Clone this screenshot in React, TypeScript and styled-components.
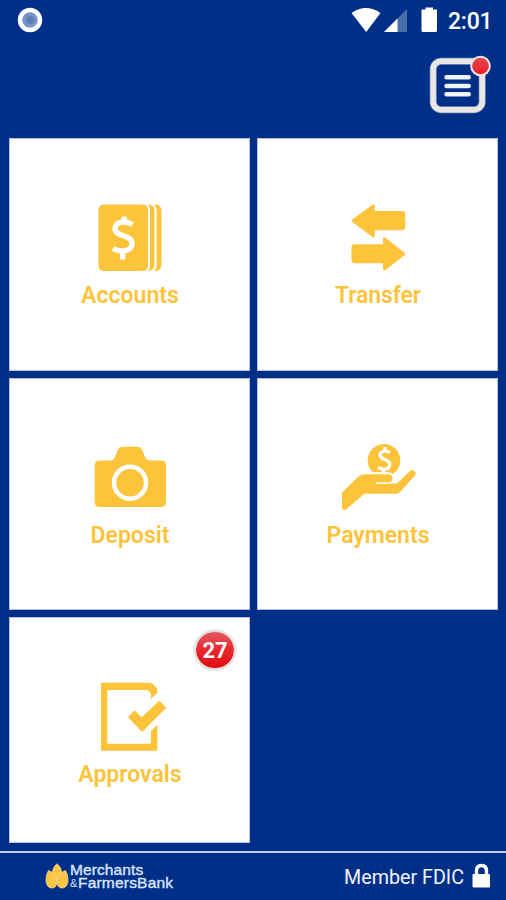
import React from 'react';
import styled, { createGlobalStyle } from 'styled-components';

const NAVY = '#002f87';
const GOLD = '#fdc33b';

const GlobalStyle = createGlobalStyle`
  body {
    margin: 0;
    background: ${NAVY};
    font-family: Roboto, 'Liberation Sans', sans-serif;
  }
`;

const Screen = styled.div`
  display: flex;
  flex-direction: column;
  width: 506px;
  height: 900px;
  overflow: hidden;
  background: ${NAVY};
`;

const StatusBar = styled.div`
  display: flex;
  justify-content: space-between;
  height: 42px;
  box-sizing: border-box;
  padding: 7px 14px 0 17px;
`;

const StatusIcons = styled.div`
  display: flex;
`;

const Clock = styled.span`
  width: 44px;
  margin-left: 10px;
  color: #fff;
  font-size: 23px;
  font-weight: 500;
  line-height: 30px;
  letter-spacing: -0.2px;
  white-space: nowrap;
`;

const Header = styled.div`
  display: flex;
  justify-content: flex-end;
  height: 96px;
  box-sizing: border-box;
  padding: 12px 13px 0 0;
`;

const MenuButton = styled.button`
  width: 66px;
  height: 62px;
  padding: 0;
  border: 0;
  background: none;
`;

const Grid = styled.div`
  display: grid;
  grid-template-columns: 241px 241px;
  grid-template-rows: 233px 232px 226px;
  gap: 7px;
  padding: 0 8px 0 9px;
`;

const Tile = styled.button`
  position: relative;
  display: flex;
  flex-direction: column;
  align-items: center;
  box-sizing: border-box;
  padding: 61px 0 0;
  border: 1px solid #b9bfd8;
  background: #fff;
  font-family: inherit;
`;

const TileLabel = styled.span<{ $spacing: number }>`
  margin-top: 4px;
  padding-left: 1px;
  color: ${GOLD};
  font-size: 23px;
  font-weight: 600;
  line-height: 32px;
  letter-spacing: ${(props) => props.$spacing}px;
`;

const Badge = styled.span`
  position: absolute;
  top: 12px;
  right: 13px;
  width: 38px;
  height: 36px;
  border: 2px solid #e2dfdf;
  outline: 1px solid #efeded;
  border-radius: 21px;
  background: linear-gradient(#e2595c, #e8272d 50%, #e20d14) padding-box;
  color: #fff;
  font-size: 22px;
  font-weight: 700;
  line-height: 38px;
  text-align: center;
`;

const Footer = styled.footer`
  display: flex;
  justify-content: space-between;
  height: 49px;
  margin-top: 8px;
  box-sizing: border-box;
  border-top: 2px solid #c5cdf0;
  padding: 0 15px 0 45px;
`;

const Brand = styled.div`
  display: flex;
  padding-top: 10px;
`;

const BrandName = styled.div`
  display: flex;
  flex-direction: column;
  margin-left: 1px;
  padding-top: 1px;
  color: #d6e3ff;
  font-family: 'Liberation Sans', sans-serif;
  font-size: 15.5px;
  line-height: 12.5px;
  white-space: nowrap;
  -webkit-text-stroke: 0.4px #d6e3ff;
`;

const BrandLine = styled.span<{ $spacing: number }>`
  display: flex;
  letter-spacing: ${(props) => props.$spacing}px;
`;

const Ampersand = styled.span`
  width: 8px;
  font-size: 11px;
  -webkit-text-stroke: 0;
`;

const Member = styled.div`
  display: flex;
  padding-top: 10px;
  color: #f2f4ff;
  font-size: 19.7px;
  line-height: 29px;
  white-space: nowrap;
`;

const Lock = styled.svg`
  margin: 0 0 0 8px;
`;

const AccountsIcon = () => (
  <svg width='81' height='76' fill={GOLD} stroke='#fff' strokeWidth='4' paintOrder='stroke'>
    <rect x='9.5' y='4.5' width='63' height='66.5' rx='6' />
    <rect x='9.5' y='4.5' width='56' height='66.5' rx='6' strokeWidth='4.4' />
    <rect x='9.5' y='4.5' width='49.5' height='66.5' rx='5' />
    <path
      d='M43.500 24.500Q38 21.500 33 22.200C28 22.800 26 25.500 26 29C26 37 43 34 43 43.500C43 48 39 51 33.500 51Q28.500 51 24 48.500M35.300 16.500V23M33.700 50V59.500'
      fill='none'
      strokeWidth='5.4'
    />
  </svg>
);

const TransferIcon = () => (
  <svg width='81' height='76' fill={GOLD} stroke={GOLD} strokeWidth='2.5' strokeLinejoin='round'>
    <path d='M15.700 20.700L36.500 5.500V12.300H65Q67 12.300 67 14.300V27Q67 29 65 29H36.500V36.300Z' />
    <path d='M67 54L47.300 38.500V45.500H17.700Q15.700 45.500 15.700 47.500V60Q15.700 62 17.700 62H47.300V69.300Z' />
  </svg>
);

const DepositIcon = () => (
  <svg width='81' height='76' fill={GOLD}>
    <path d='M10.500 20.500H21Q24.500 20.500 26 17L28.500 10.500Q30 6.700 34 6.700H48Q52 6.700 53.500 10.500L56 17Q57.500 20.500 61 20.500H72Q77 20.500 77 25.500V62Q77 67 72 67H10.500Q5.700 67 5.700 62V25.500Q5.700 20.500 10.500 20.500Z' />
    <circle cx='41' cy='42.7' r='16' fill='none' stroke='#fff' strokeWidth='4.5' />
  </svg>
);

const PaymentsIcon = () => (
  <svg width='81' height='76'>
    <circle cx='47' cy='20.3' r='16.3' fill={GOLD} />
    <path
      d='M53 12.500Q49 10.500 46 11.500C41.500 13 42.500 17 46.500 19C52 21 54 23 52 27C50 30 45 29.500 41 27.500M48 7V12M46.500 29V34'
      fill='none'
      stroke='#fff'
      strokeWidth='3.4'
    />
    <path
      d='M5 52.500L21 37Q24 34.300 28 34.300H51Q55.500 34.300 55.500 38.500Q55.500 42.700 51 42.700H39.500V43.500H58Q60 43.500 61.500 42L72.500 31.500Q75 29.500 77.500 31Q80 33 77.500 36L63.500 51.500Q62 53.700 59 53.700H27.500L9 69.500Q5 71.500 5 67Z'
      fill={GOLD}
      stroke='#fff'
      strokeWidth='4'
      paintOrder='stroke'
    />
    <path d='M39.500 43.200H51Q55.500 43.200 56 39' fill='none' stroke='#fff' strokeWidth='1.3' strokeLinecap='round' />
  </svg>
);

const ApprovalsIcon = () => (
  <svg width='81' height='76' fill={GOLD}>
    <path d='M12 3.700H60.500Q62.500 3.700 64 5.200L67 8.200Q68.300 9.500 68.300 11V14L62 19.700V14.500L58.500 11H18.300V64.700H62V52L68.300 46V71.700H12Z' />
    <path d='M39 38.300L45.300 31.300L52.700 38.300L70.300 21.700L77.300 28.700L53 53Z' />
  </svg>
);

type TileData = {
  label: string;
  spacing: number;
  Icon: () => React.JSX.Element;
  badge?: number;
};

const tiles: TileData[] = [
  { label: 'Accounts', spacing: 0.05, Icon: AccountsIcon },
  { label: 'Transfer', spacing: -0.1, Icon: TransferIcon },
  { label: 'Deposit', spacing: 0, Icon: DepositIcon },
  { label: 'Payments', spacing: 0, Icon: PaymentsIcon },
  { label: 'Approvals', spacing: 0, Icon: ApprovalsIcon, badge: 27 },
];

export default function App() {
  return (
    <Screen>
      <GlobalStyle />
      <StatusBar>
        <svg width='26' height='26'>
          <circle cx='13' cy='13' r='10' fill='#7795c7' stroke='#fff' strokeWidth='4.5' />
          <circle cx='13' cy='13' r='4' fill='#5c80bb' />
        </svg>
        <StatusIcons>
          <svg width='87' height='26' fill='#fff'>
            <path d='M.5 6Q15 -4 29.500 6L15.200 25Z' />
            <path d='M56 2V25H33Z' fill='#496fab' />
            <path d='M46.500 11.500V25H33Z' />
            <path d='M74.500 .5H82V2.500H86V23.500Q86 25 84.500 25H72Q70.500 25 70.500 23.500V2.500H74.500Z' />
          </svg>
          <Clock>2:01</Clock>
        </StatusIcons>
      </StatusBar>
      <Header>
        <MenuButton aria-label='Menu'>
          <svg width='66' height='62'>
            <rect x='6.2' y='7.2' width='49' height='48.5' rx='8' fill='none' stroke='#8796bd' strokeWidth='7' />
            <rect x='6.2' y='7.2' width='49' height='48.5' rx='8' fill='none' stroke='#e9e7e6' strokeWidth='5.5' />
            <path d='M19.500 23.300H41.700M19.500 32H41.700M19.500 40.300H41.700' stroke='#f1f3fa' strokeWidth='4.5' strokeLinecap='round' />
            <circle cx='53.5' cy='12' r='10.3' fill='#e9e6e6' />
            <circle cx='53.5' cy='12' r='8.3' fill='url(#alert)' />
            <defs>
              <linearGradient id='alert' x1='0' y1='0' x2='0' y2='1'>
                <stop offset='0' stopColor='#e4494d' />
                <stop offset='1' stopColor='#e91e27' />
              </linearGradient>
            </defs>
          </svg>
        </MenuButton>
      </Header>
      <Grid>
        {tiles.map(({ label, spacing, Icon, badge }) => (
          <Tile key={label}>
            <Icon />
            <TileLabel $spacing={spacing}>{label}</TileLabel>
            {badge && <Badge>{badge}</Badge>}
          </Tile>
        ))}
      </Grid>
      <Footer>
        <Brand>
          <svg width='24' height='27' fill='#fcc544' stroke='#f3dfa4' strokeWidth='.7'>
            <path d='M12 .7C15 3.500 16.500 6 16.500 9C16.500 12 14 15 12 16C10 15 7.500 12 7.500 9C7.500 6 9 3.500 12 .7Z' />
            <path d='M3.500 7.500C9 9.500 12 14 12 18C12 23 10 25 7 25C3 25 1 21.500 1 17C1 13 2 10 3.500 7.500Z' />
            <path d='M20.500 7.500C15 9.500 12 14 12 18C12 23 14 25 17 25C21 25 23 21.500 23 17C23 13 22 10 20.500 7.500Z' />
          </svg>
          <BrandName>
            <BrandLine $spacing={0.1}>Merchants</BrandLine>
            <BrandLine $spacing={0.2}>
              <Ampersand>&amp;</Ampersand>
              <span>FarmersBank</span>
            </BrandLine>
          </BrandName>
        </Brand>
        <Member>
          Member FDIC
          <Lock width='19' height='26'>
            <path d='M4.500 11V8Q4.500 2.500 9.500 2.500Q14.500 2.500 14.500 8V11' fill='none' stroke='#fff' strokeWidth='3.4' />
            <rect x='.5' y='11' width='17.5' height='13.5' rx='1' fill='#fff' />
          </Lock>
        </Member>
      </Footer>
    </Screen>
  );
}
